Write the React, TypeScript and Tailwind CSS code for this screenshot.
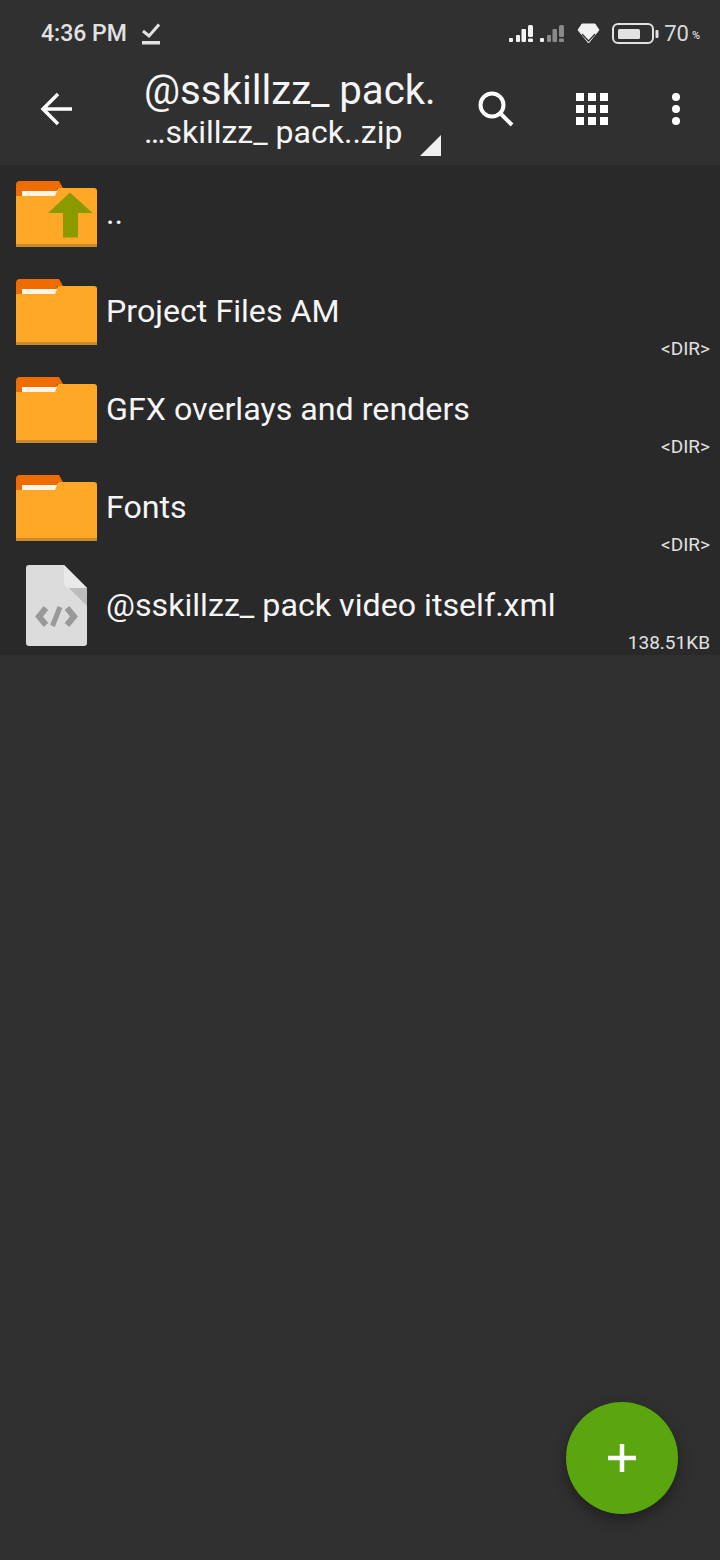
const fontRoboto = "font-['Roboto',sans-serif]";

function FolderIcon({ up = false }: { up?: boolean }) {
  return (
    <svg width="81" height="66" viewBox="0 0 81 66" className="shrink-0">
      <path d="M0 4a4 4 0 0 1 4-4h39l4 7h-6v10H0z" fill="#ef6c00" />
      <path d="M0 15h38l4-8H78a3 3 0 0 1 3 3v53H0z" fill="#ffa726" />
      <path d="M6 10h35l-2 5H6z" fill="#fff5e5" />
      <rect x="0" y="63" width="81" height="3" fill="#c98a2b" />
      {up ? <path d="M54 11.500 76.500 32H62v24.500H47V32H32z" fill="#8a9a00" /> : null}
    </svg>
  );
}

function XmlIcon() {
  return (
    <svg width="61" height="81" viewBox="0 0 61 81" className="ml-[10px] mr-[10px] shrink-0">
      <path d="M3 0h35l23 23v55a3 3 0 0 1-3 3H3a3 3 0 0 1-3-3V3a3 3 0 0 1 3-3z" fill="#dcdcdc" />
      <path d="M38 0l23 23H43a5 5 0 0 1-5-5z" fill="#e9e9e9" />
      <path d="M43 23h18v18z" fill="#bcbcbc" />
      <path d="M20 43l-7 8.500 7 8.500M41 43l7 8.500-7 8.500" fill="none" stroke="#999999" strokeWidth="6" />
      <path d="M34 42l-7.500 19" fill="none" stroke="#999999" strokeWidth="5" />
    </svg>
  );
}

type Entry = { name: string; size?: string; kind: "up" | "dir" | "xml" };

const entries: Entry[] = [
  { name: "..", kind: "up" },
  { name: "Project Files AM", size: "<DIR>", kind: "dir" },
  { name: "GFX overlays and renders", size: "<DIR>", kind: "dir" },
  { name: "Fonts", size: "<DIR>", kind: "dir" },
  { name: "@sskillzz_ pack video itself.xml", size: "138.51KB", kind: "xml" },
];

function FileRow({ entry }: { entry: Entry }) {
  return (
    <div className="flex h-[98px] pl-4 pr-[10px]">
      <div className={entry.kind === "xml" ? "-ml-4 pl-4 pt-2" : "pt-4"}>
        {entry.kind === "xml" ? <XmlIcon /> : <FolderIcon up={entry.kind === "up"} />}
      </div>
      <div className="ml-[9px] flex min-w-0 flex-1 flex-col">
        <div className="mt-[26px] h-[44px] text-[32.2px] leading-[44px] text-[#f5f5f5]">{entry.name}</div>
        {entry.size ? (
          <div className="mt-[4px] text-right text-[19px] leading-[24px] text-[#e0e0e0]">{entry.size}</div>
        ) : null}
      </div>
    </div>
  );
}

function StatusBar() {
  return (
    <div className="flex h-[66px] items-center pl-[41px] pr-[20px] pt-[1px]">
      <span className="text-[23px] font-medium leading-[26px] text-[#e2e2e2]">4:36 PM</span>
      <svg width="18" height="22" viewBox="0 0 18 22" className="ml-[15px]">
        <path d="M1 8l6 5L17 1.500" fill="none" stroke="#e2e2e2" strokeWidth="3" />
        <rect x="0" y="18" width="18" height="3.500" fill="#e2e2e2" />
      </svg>
      <svg width="56" height="17" viewBox="0 0 56 17" className="ml-auto">
        <g fill="#f2f2f2">
          <rect x="0" y="13" width="4" height="4" rx="1" />
          <rect x="7" y="10" width="4" height="7" rx="1" />
          <rect x="12.500" y="4" width="4.500" height="13" rx="1" />
          <rect x="19" y="0" width="5" height="12" rx="1.500" />
          <rect x="19" y="13.500" width="5" height="3.500" rx="1" />
          <rect x="31" y="13" width="4" height="4" rx="1" />
        </g>
        <g fill="#8a8a8a">
          <rect x="38" y="10" width="4" height="7" rx="1" />
          <rect x="43.500" y="4" width="4.500" height="13" rx="1" />
          <rect x="50" y="0" width="5" height="12" rx="1.500" />
          <rect x="50" y="13.500" width="5" height="3.500" rx="1" />
        </g>
      </svg>
      <svg width="23" height="21" viewBox="0 0 23 21" className="ml-[12px]">
        <path d="M5 1h13l4 6-10.500 13L1 7z" fill="#f2f2f2" stroke="#f2f2f2" strokeWidth="1" />
        <path d="M5 11l6.500 7 6.500-7" fill="none" stroke="#303030" strokeWidth="1.200" />
      </svg>
      <svg width="47" height="22" viewBox="0 0 47 22" className="ml-[12px]">
        <rect x="1" y="1" width="40" height="19" rx="5" fill="none" stroke="#e2e2e2" strokeWidth="2" />
        <rect x="6" y="6" width="22" height="10" rx="1.500" fill="#e2e2e2" />
        <rect x="43.500" y="7" width="3" height="8" rx="1" fill="#e2e2e2" />
      </svg>
      <span className="ml-[5px] text-[22px] leading-[26px] text-[#d8d8d8]">70</span>
      <span className="ml-[3px] mt-[4px] text-[11px] font-medium leading-[14px] text-[#d8d8d8]">%</span>
    </div>
  );
}

function Toolbar() {
  return (
    <div className="flex h-[99px] items-start">
      <svg width="34" height="34" viewBox="0 0 34 34" className="ml-[40px] mt-[26px] shrink-0">
        <path d="M32 17H3M18 2 3 17l15 15" fill="none" stroke="#ffffff" strokeWidth="3.500" />
      </svg>
      <div className="ml-[70px] mt-[1px] w-[276px] shrink-0 whitespace-nowrap text-[#f5f5f5]">
        <div className="h-[47px] text-[40.2px] leading-[47px]">@sskillzz_ pack.</div>
        <div className="h-[36px] text-[32px] leading-[36px]">…skillzz_ pack..zip</div>
      </div>
      <svg width="21" height="21" viewBox="0 0 21 21" className="mt-[69px] shrink-0">
        <path d="M21 0v21H0z" fill="#f0f0f0" />
      </svg>
      <svg width="36" height="36" viewBox="0 0 36 36" className="ml-[37px] mt-[25px] shrink-0">
        <circle cx="14" cy="14" r="11.500" fill="none" stroke="#ffffff" strokeWidth="4" />
        <path d="M22.500 22.500 34 34" fill="none" stroke="#ffffff" strokeWidth="4" />
      </svg>
      <div className="ml-[62px] mt-[27px] grid shrink-0 grid-cols-[repeat(3,8px)] gap-[4px]">
        {Array.from({ length: 9 }).map((_, i) => (
          <div key={i} className="h-[8px] w-[8px] bg-white" />
        ))}
      </div>
      <div className="ml-[64px] mt-[27px] flex shrink-0 flex-col gap-[4px]">
        <div className="h-[8px] w-[8px] rounded-full bg-white" />
        <div className="h-[8px] w-[8px] rounded-full bg-white" />
        <div className="h-[8px] w-[8px] rounded-full bg-white" />
      </div>
    </div>
  );
}

export default function App() {
  return (
    <div className={`relative min-h-[1560px] w-[720px] overflow-hidden bg-[#303030] ${fontRoboto}`}>
      <StatusBar />
      <Toolbar />
      <div className="bg-[#292929]">
        {entries.map((entry) => (
          <FileRow key={entry.name} entry={entry} />
        ))}
      </div>
      <button className="absolute bottom-[46px] right-[42px] flex h-[112px] w-[112px] items-center justify-center rounded-full bg-[#5ba60e] shadow-[0_6px_14px_rgba(0,0,0,0.35)]">
        <svg width="28" height="28" viewBox="0 0 28 28">
          <path d="M14 0v28M0 14h28" stroke="#ffffff" strokeWidth="4.500" fill="none" />
        </svg>
      </button>
    </div>
  );
}
